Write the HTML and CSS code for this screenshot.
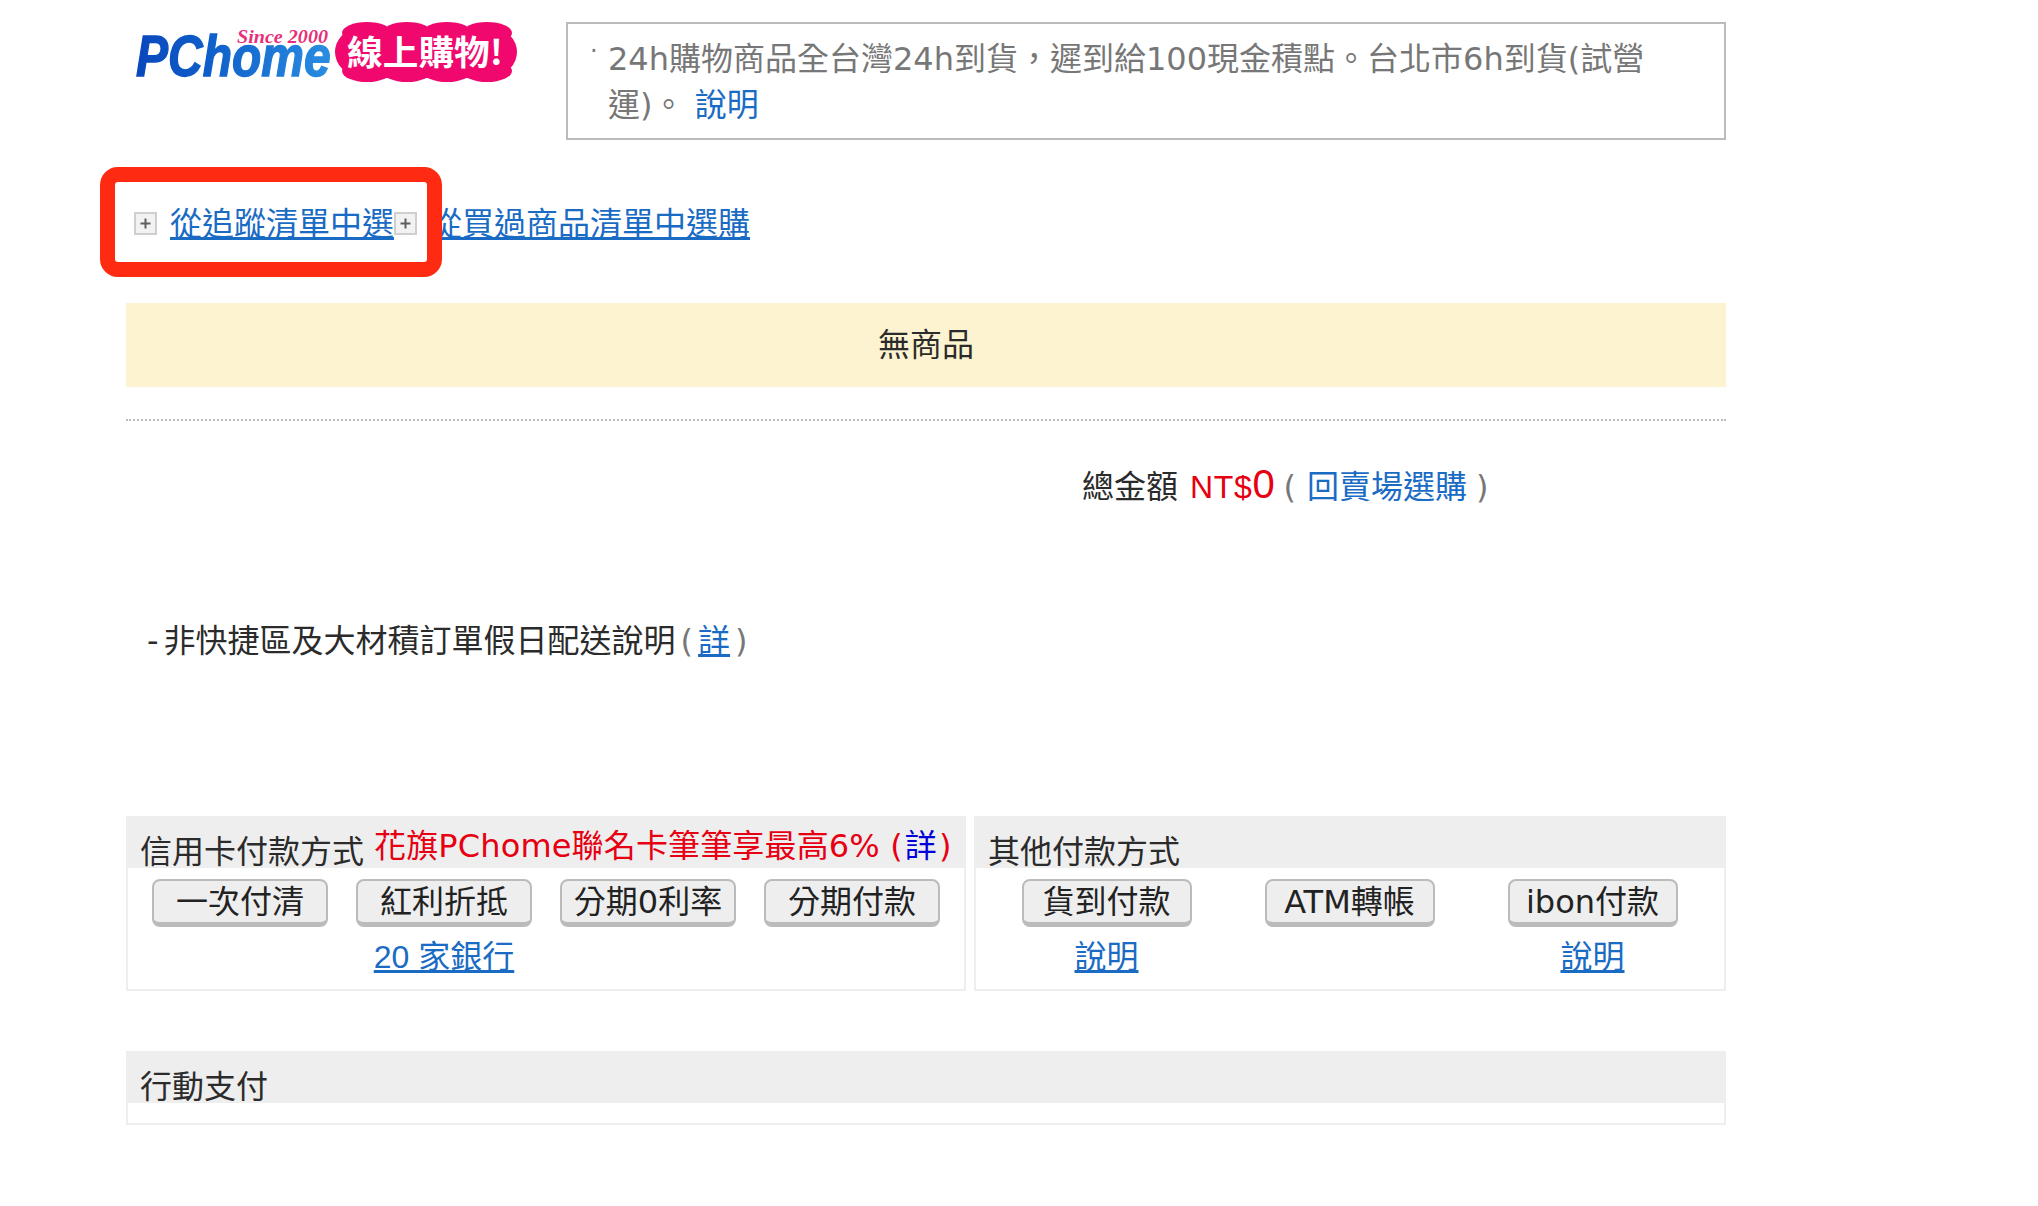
FILE: index.html
```html
<!DOCTYPE html>
<html lang="zh-Hant">
<head>
    <meta charset="UTF-8">
    <title>PChome 線上購物</title>
    <link rel="stylesheet" href="styles.css">
</head>
<body>
    <div class="page">
        <!-- Header -->
        <div class="header">
            <svg class="logo" width="392" height="66" viewBox="0 0 392 66">
                <defs>
                    <linearGradient id="logo-blue" gradientUnits="userSpaceOnUse" x1="6" x2="200" y1="0" y2="0">
                        <stop offset="0" stop-color="#0a49bd"/>
                        <stop offset="0.35" stop-color="#0f5fca"/>
                        <stop offset="1" stop-color="#2b8fe2"/>
                    </linearGradient>
                </defs>
                <text class="logo-name" transform="translate(6 56) scale(1 1.2)" fill="url(#logo-blue)" stroke="url(#logo-blue)">PChome</text>
                <text class="logo-since" x="107" y="23" textLength="91" lengthAdjust="spacingAndGlyphs">Since 2000</text>
                <g fill="#f0086e">
                    <rect x="205" y="9" width="182" height="46" rx="23"/>
                    <ellipse cx="237" cy="13" rx="25" ry="11"/>
                    <ellipse cx="277" cy="13" rx="25" ry="11"/>
                    <ellipse cx="317" cy="13" rx="25" ry="11"/>
                    <ellipse cx="357" cy="13" rx="25" ry="11"/>
                    <ellipse cx="237" cy="51" rx="25" ry="11"/>
                    <ellipse cx="277" cy="51" rx="25" ry="11"/>
                    <ellipse cx="317" cy="51" rx="25" ry="11"/>
                    <ellipse cx="357" cy="51" rx="25" ry="11"/>
                </g>
                <text class="logo-slogan" x="217" y="45" textLength="156" lengthAdjust="spacingAndGlyphs">線上購物!</text>
            </svg>
            <div class="notice">
                <span class="notice-dot">·</span>
                <p class="notice-text">24h購物商品全台灣24h到貨，遲到給100現金積點。台北市6h到貨(試營運)。 <a class="plain-link" href="#">說明</a></p>
            </div>
        </div>

        <!-- Pick from lists -->
        <div class="pick-row">
            <svg class="plus-icon" width="23" height="23" viewBox="0 0 23 23"><rect x="1" y="1" width="21" height="21" fill="#f2f2f2" stroke="#cfcfcf" stroke-width="2"/><path d="M6.5 11.5h10M11.5 6.5v10" stroke="#5e5e5e" stroke-width="2"/></svg>
            <a class="under-link" href="#">從追蹤清單中選</a>
            <svg class="plus-icon" width="23" height="23" viewBox="0 0 23 23"><rect x="1" y="1" width="21" height="21" fill="#f2f2f2" stroke="#cfcfcf" stroke-width="2"/><path d="M6.5 11.5h10M11.5 6.5v10" stroke="#5e5e5e" stroke-width="2"/></svg>
            <a class="under-link" href="#">從買過商品清單中選購</a>
        </div>
        <div class="mark-box"></div>

        <div class="empty-bar">無商品</div>
        <div class="dotted-line"></div>

        <div class="total-row">
            <span class="total-label">總金額</span>
            <span class="total-price">NT$<b>0</b></span>
            <span class="paren">(</span>
            <a class="plain-link" href="#">回賣場選購</a>
            <span class="paren close">)</span>
        </div>

        <div class="note"><span class="note-dash">-</span>非快捷區及大材積訂單假日配送說明<span class="paren">(</span><a class="under-link" href="#">詳</a><span class="paren">)</span></div>

        <!-- Payment -->
        <div class="pay-row">
            <div class="pay-panel credit">
                <div class="pay-head">
                    <span class="pay-title">信用卡付款方式</span>
                    <span class="pay-promo">花旗PChome聯名卡筆筆享最高6% (<a class="promo-link" href="#">詳</a>)</span>
                </div>
                <div class="pay-grid four">
                    <button class="pay-button">一次付清</button>
                    <button class="pay-button">紅利折抵</button>
                    <button class="pay-button">分期0利率</button>
                    <button class="pay-button">分期付款</button>
                    <span></span>
                    <a class="under-link bank-link" href="#">20 家銀行</a>
                </div>
            </div>
            <div class="pay-panel other">
                <div class="pay-head">
                    <span class="pay-title">其他付款方式</span>
                </div>
                <div class="pay-grid three">
                    <button class="pay-button">貨到付款</button>
                    <button class="pay-button">ATM轉帳</button>
                    <button class="pay-button">ibon付款</button>
                    <a class="under-link" href="#">說明</a>
                    <span></span>
                    <a class="under-link" href="#">說明</a>
                </div>
            </div>
        </div>

        <div class="pay-panel mobile">
            <div class="pay-head">
                <span class="pay-title">行動支付</span>
            </div>
        </div>
    </div>
</body>
</html>
```

FILE: styles.css
```css
body {
    margin: 0;
    background: #fff;
    color: #2b2b2b;
    font-family: "DejaVu Sans", "Noto Sans CJK TC", sans-serif;
    font-size: 32px;
    line-height: 46px;
}
a {
    text-decoration: none;
}
.page {
    position: relative;
    width: 1600px;
    margin-left: 126px;
    padding-top: 20px;
}

/* Header */
.header {
    display: flex;
    align-items: flex-start;
}
.logo {
    flex: none;
    margin-left: 4px;
    margin-right: 44px;
}
.logo-name {
    font-family: "Liberation Sans", sans-serif;
    font-size: 48px;
    font-weight: bold;
    font-style: italic;
    stroke-width: 1.2px;
}
.logo-since {
    font-family: "Liberation Serif", serif;
    font-size: 18px;
    font-weight: bold;
    font-style: italic;
    fill: #e8307a;
}
.logo-slogan {
    font-family: "Noto Sans CJK TC", sans-serif;
    font-size: 34px;
    font-weight: bold;
    fill: #fff;
}
.notice {
    flex: 1;
    display: flex;
    height: 118px;
    margin-top: 2px;
    padding: 12px 70px 0 22px;
    box-sizing: border-box;
    border: 2px solid #bbb;
    color: #777;
}
.notice-dot {
    flex: none;
    width: 18px;
    font-size: 24px;
    line-height: 30px;
}
.notice-text {
    margin: 0;
}
.plain-link {
    color: #1a6bc4;
}
.under-link {
    color: #1a6bc4;
    text-decoration: underline;
}

/* Pick from lists */
.pick-row {
    display: flex;
    align-items: center;
    height: 160px;
    padding: 7px 0 0 8px;
    box-sizing: border-box;
}
.plus-icon {
    flex: none;
    margin-right: 13px;
}
.mark-box {
    position: absolute;
    left: -26px;
    top: 167px;
    width: 342px;
    height: 110px;
    box-sizing: border-box;
    border: 15px solid #ff2a12;
    border-radius: 18px;
}
.empty-bar {
    display: flex;
    align-items: center;
    justify-content: center;
    height: 84px;
    margin-top: 3px;
    background: #fef3d0;
}
.dotted-line {
    margin-top: 32px;
    border-top: 2px dotted #bbb;
}
.total-row {
    display: flex;
    align-items: baseline;
    margin-top: 40px;
    padding-left: 956px;
}
.total-price {
    margin-left: 12px;
    color: #e60012;
    font-family: "Liberation Sans", sans-serif;
    letter-spacing: 0.7px;
}
.total-price b {
    font-size: 40px;
    font-weight: normal;
}
.paren {
    color: #777;
    margin: 0 8px;
}
.paren.close {
    margin-left: 6px;
}
.total-row .plain-link {
    margin: 0 3px;
}
.note {
    margin-top: 108px;
    padding-left: 21px;
}
.note-dash {
    margin-right: 5px;
}
.note .paren {
    margin: 0 5px;
}

/* Payment */
.pay-row {
    display: flex;
    gap: 8px;
    margin-top: 152px;
}
.pay-panel {
    box-sizing: border-box;
    border: 2px solid #eee;
    border-top: 0;
}
.pay-panel.credit {
    width: 840px;
    height: 175px;
}
.pay-panel.other {
    width: 752px;
    height: 175px;
}
.pay-panel.mobile {
    height: 74px;
    margin-top: 60px;
}
.pay-head {
    display: flex;
    align-items: flex-start;
    height: 52px;
    margin: 0 -2px;
    padding-left: 14px;
    background: #eee;
}
.pay-title {
    padding-top: 13px;
}
.pay-promo {
    margin-left: 10px;
    padding-top: 7px;
    color: #e60012;
    letter-spacing: 0.15px;
}
.promo-link {
    margin: 0 2px;
    color: #0000d8;
}
.pay-grid {
    display: grid;
    align-items: center;
    justify-items: center;
    margin-top: 11px;
}
.pay-grid.four {
    grid-template-columns: repeat(4, 176px);
    column-gap: 28px;
    padding-left: 24px;
}
.pay-grid.three {
    grid-template-columns: repeat(3, 243px);
    padding-left: 9px;
}
.pay-grid .under-link {
    margin-top: 7px;
}
.bank-link {
    font-family: "Liberation Sans", "Noto Sans CJK TC", sans-serif;
}
.pay-button {
    height: 48px;
    padding: 0;
    box-sizing: border-box;
    border: 2px solid #bbb;
    border-bottom-width: 5px;
    border-radius: 8px;
    background: #eee;
    color: #222;
    font: inherit;
    line-height: 38px;
}
.four .pay-button {
    width: 176px;
}
.three .pay-button {
    width: 170px;
}
```
